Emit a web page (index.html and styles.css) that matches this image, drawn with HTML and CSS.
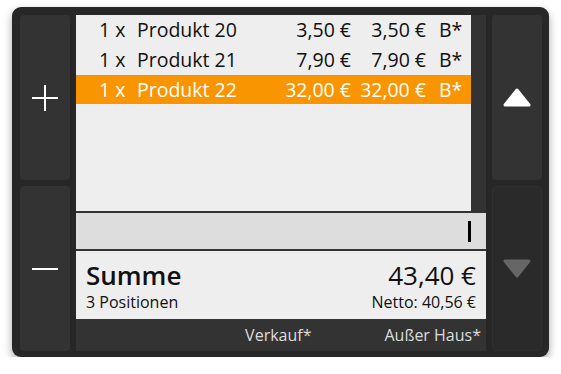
FILE: index.html
```html
<!DOCTYPE html>
<html lang="de">
<head>
  <meta charset="UTF-8" />
  <meta name="viewport" content="width=device-width, initial-scale=1.0"/>
  <title>Kasse - Bon</title>
  <link rel="stylesheet" href="styles.css">
</head>
<body>
  <div class="kasse">
    <div class="seite">
      <button class="taste" type="button">
        <svg width="26" height="26" viewBox="0 0 26 26"><path d="M13 0v26M0 13h26" stroke="#fff" stroke-width="2"/></svg>
      </button>
      <button class="taste" type="button">
        <svg width="26" height="2" viewBox="0 0 26 2"><path d="M0 1h26" stroke="#fff" stroke-width="2"/></svg>
      </button>
    </div>

    <div class="bon">
      <div class="liste">
        <ul class="posten">
          <li><span>1 x</span><span>Produkt 20</span><span class="preis">3,50 €</span><span class="preis">3,50 €</span><span class="steuer">B*</span></li>
          <li><span>1 x</span><span>Produkt 21</span><span class="preis">7,90 €</span><span class="preis">7,90 €</span><span class="steuer">B*</span></li>
          <li class="aktiv"><span>1 x</span><span>Produkt 22</span><span class="preis">32,00 €</span><span class="preis">32,00 €</span><span class="steuer">B*</span></li>
        </ul>
        <div class="scroll"></div>
      </div>

      <div class="eingabe"><span class="cursor"></span></div>

      <div class="summe">
        <div>
          <div class="summe-titel">Summe</div>
          <div class="klein">3 Positionen</div>
        </div>
        <div class="rechts">
          <div class="betrag">43,40 €</div>
          <div class="klein">Netto: 40,56 €</div>
        </div>
      </div>

      <div class="fuss">
        <span>Verkauf*</span>
        <span>Außer Haus*</span>
      </div>
    </div>

    <div class="seite">
      <button class="taste" type="button">
        <svg width="28" height="20" viewBox="0 0 28 20"><path d="M14 2L26 17H2Z" fill="#fff" stroke="#fff" stroke-width="3" stroke-linejoin="round"/></svg>
      </button>
      <button class="taste aus" type="button">
        <svg width="28" height="20" viewBox="0 0 28 20"><path d="M2 2H26L14 17Z" fill="#666" stroke="#666" stroke-width="3" stroke-linejoin="round"/></svg>
      </button>
    </div>
  </div>
</body>
</html>
```

FILE: styles.css
```css
* { margin: 0; padding: 0; box-sizing: border-box; font-family: 'Open Sans', 'Noto Sans', sans-serif; }
body { background: #fff; color: #111; }

.kasse {
  margin: 7px 0 0 12px; width: 537px; height: 350px;
  background: #272727; border-radius: 9px;
  padding: 8px 7px 6px 8px;
  display: grid; grid-template-columns: 50px 410px 50px; gap: 6px;
  box-shadow: 0 4px 9px rgba(0,0,0,0.35);
}

.seite { display: grid; grid-template-rows: 1fr 1fr; gap: 6px; }
.taste {
  background: #333; border: none; border-radius: 4px;
  display: flex; align-items: center; justify-content: center;
}
.taste.aus { background: #2a2a2a; border: 1px solid #2f2f2f; }

.bon { display: flex; flex-direction: column; background: #333; }

.liste { height: 196px; display: flex; }
.posten { list-style: none; flex: 1; background: #eee; }
.posten li {
  display: grid; grid-template-columns: 38px 1fr 75px 75px 45px;
  padding-left: 23px; height: 30px; line-height: 30px;
  font-size: 19.5px; white-space: nowrap;
}
.posten li.aktiv { background: #f89500; color: #fff; height: 29px; }
.posten .preis { text-align: right; }
.posten .steuer { padding-left: 13px; }
.scroll { width: 15px; background: #333; }

.eingabe {
  margin-top: 2px; height: 36px; background: #ddd;
  display: flex; align-items: center; justify-content: flex-end; padding-right: 15px;
}
.cursor { width: 3px; height: 21px; background: #000; }

.summe {
  margin-top: 2px; height: 68px; background: #eee;
  display: flex; justify-content: space-between; padding: 8px 10px 0;
}
.summe-titel { font-size: 26px; font-weight: 600; line-height: 32px; }
.betrag { font-size: 26px; line-height: 32px; }
.klein { font-size: 16px; line-height: 22px; }
.rechts { text-align: right; }

.fuss {
  flex: 1; display: flex; justify-content: flex-end; align-items: center; gap: 73px;
  padding-right: 5px; color: #ddd; font-size: 16px;
}
```
